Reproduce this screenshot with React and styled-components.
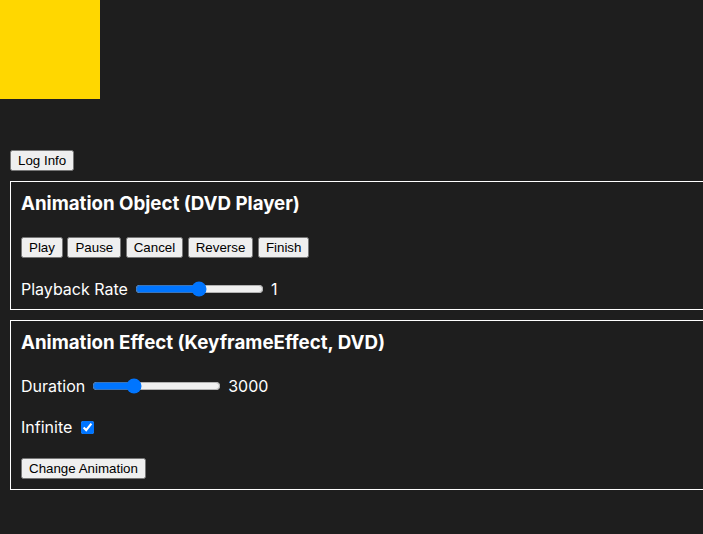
import React, { useState } from "react"
import styled, { createGlobalStyle } from "styled-components"

const GlobalStyle = createGlobalStyle`
  html, body {
    margin: 0;
    background: #1e1e1e;
    color: #ffffff;
    font-family: Inter, "Liberation Sans", sans-serif;
    font-size: 16px;
    overflow: hidden;
  }
`

const Stage = styled.div`
  height: 139px;
`

const Dvd = styled.div`
  width: 100px;
  height: 99px;
  background: #ffd700;
`

const Controls = styled.div`
  padding: 10px;
`

const Button = styled.button`
  font-family: "Liberation Sans", Arial, sans-serif;
  font-size: 13.33px;
  margin: 0;
`

const Section = styled.section`
  margin-top: 10px;
  padding: 10px;
  border: 1px solid #ffffff;
  width: 100%;
  display: flex;
  flex-direction: column;
  align-items: flex-start;
  gap: 21px;
`

const Heading = styled.h3`
  margin: 0 0 1px;
  font-size: 1.17em;
  font-weight: 700;
`

const ButtonRow = styled.div`
  display: flex;
  gap: 4.5px;
`

const Field = styled.label`
  display: flex;
  align-items: center;
  line-height: normal;
`

const Slider = styled.input.attrs({ type: "range" })`
  width: 129px;
  margin: 0 7px;
`

const Check = styled.input.attrs({ type: "checkbox" })`
  width: 13px;
  height: 13px;
  margin: 0 0 0 9px;
`

export default function App() {
  const [rate, setRate] = useState(1)
  const [duration, setDuration] = useState(3000)
  const [infinite, setInfinite] = useState(true)

  return (
    <>
      <GlobalStyle />
      <Stage>
        <Dvd />
      </Stage>
      <Controls>
        <Button>Log Info</Button>
        <Section>
          <Heading>Animation Object (DVD Player)</Heading>
          <ButtonRow>
            <Button>Play</Button>
            <Button>Pause</Button>
            <Button>Cancel</Button>
            <Button>Reverse</Button>
            <Button>Finish</Button>
          </ButtonRow>
          <Field>
            Playback Rate
            <Slider
              min="0"
              max="2"
              step="0.1"
              value={rate}
              onChange={(e) => setRate(Number(e.target.value))}
            />
            {rate}
          </Field>
        </Section>
        <Section>
          <Heading>Animation Effect (KeyframeEffect, DVD)</Heading>
          <Field>
            Duration
            <Slider
              min="0"
              max="10000"
              step="100"
              value={duration}
              onChange={(e) => setDuration(Number(e.target.value))}
            />
            {duration}
          </Field>
          <Field>
            Infinite
            <Check
              checked={infinite}
              onChange={(e) => setInfinite(e.target.checked)}
            />
          </Field>
          <Button>Change Animation</Button>
        </Section>
      </Controls>
    </>
  )
}
